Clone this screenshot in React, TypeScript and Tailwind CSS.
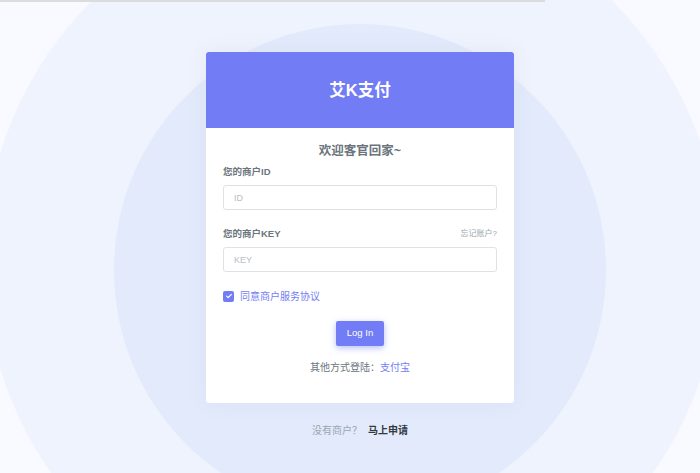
import React, { useState } from "react";

const font = "font-['Liberation_Sans','Noto_Sans_CJK_SC',sans-serif]";

const Field = ({
  label,
  placeholder,
  aside,
}: {
  label: string;
  placeholder: string;
  aside?: string;
}) => (
  <div className="flex flex-col">
    <div className="flex h-[14px] items-center justify-between">
      <span className="text-[9.5px] font-semibold text-[#6c757d]">{label}</span>
      {aside && <span className="text-[8px] text-[#98a6ad]">{aside}</span>}
    </div>
    <input
      placeholder={placeholder}
      className="mt-[6px] h-[25px] w-full rounded-[3px] border border-[#dee2e6] bg-white px-[10px] text-[9px] text-[#6c757d] outline-none placeholder:text-[#b8bec5]"
    />
  </div>
);

const App = () => {
  const [agreed, setAgreed] = useState(true);

  return (
    <div className={`relative h-[473px] w-[700px] overflow-hidden bg-[#f8faff] ${font}`}>
      {/* background rings */}
      <div className="absolute left-[-16px] top-[-107px] h-[736px] w-[736px] rounded-full bg-[#eef3fe]" />
      <div className="absolute left-[114px] top-[24px] h-[492px] w-[492px] rounded-full bg-[#e2eafc]" />
      <div className="absolute left-0 top-0 h-[2px] w-[545px] bg-[#dcdcdc]" />

      <div className="relative flex flex-col items-center pl-[20px] pt-[52px]">
        <div className="w-[308px] overflow-hidden rounded-[3px] bg-white shadow-[0_0_20px_rgba(154,161,171,0.12)]">
          <div className="flex h-[76px] items-center justify-center bg-[#727cf5]">
            <h1 className="text-[16.5px] font-bold text-white">艾K支付</h1>
          </div>

          <div className="px-[17px] pb-[28px] pt-[15px]">
            <h4 className="text-center text-[12.5px] font-bold leading-[16px] text-[#6c757d]">欢迎客官回家~</h4>
            <div className="mt-[6px] flex flex-col gap-[17px]">
              <Field label="您的商户ID" placeholder="ID" />
              <Field label="您的商户KEY" placeholder="KEY" aside="忘记账户?" />
            </div>

            <label className="mt-[17px] flex h-[14px] cursor-pointer items-center gap-[6px]">
              <span
                onClick={() => setAgreed(!agreed)}
                className={`flex h-[11px] w-[11px] items-center justify-center rounded-[2px] ${
                  agreed ? "bg-[#727cf5]" : "border border-[#dee2e6] bg-white"
                }`}
              >
                {agreed && (
                  <svg viewBox="0 0 12 12" className="h-[8px] w-[8px]">
                    <path d="M2.5 6.2l2.3 2.3 4.7-5" fill="none" stroke="white" strokeWidth="1.8" strokeLinecap="round" strokeLinejoin="round" />
                  </svg>
                )}
              </span>
              <span className="text-[10px] text-[#727cf5]">同意商户服务协议</span>
            </label>

            <div className="mt-[18px] flex justify-center">
              <button className="h-[25px] w-[48px] rounded-[2px] bg-[#727cf5] text-[9.5px] text-white shadow-[0_2px_6px_0_rgba(114,124,245,0.5)]">
                Log In
              </button>
            </div>

            <p className="mt-[15px] text-center text-[10px] leading-[14px] text-[#6c757d]">
              其他方式登陆：<span className="text-[#727cf5]">支付宝</span>
            </p>
          </div>
        </div>

        <p className="mt-[21px] text-[10px] leading-[14px] text-[#98a6ad]">
          没有商户？<span className="ml-[6px] font-bold text-[#343a40]">马上申请</span>
        </p>
      </div>
    </div>
  );
};

export default App;
